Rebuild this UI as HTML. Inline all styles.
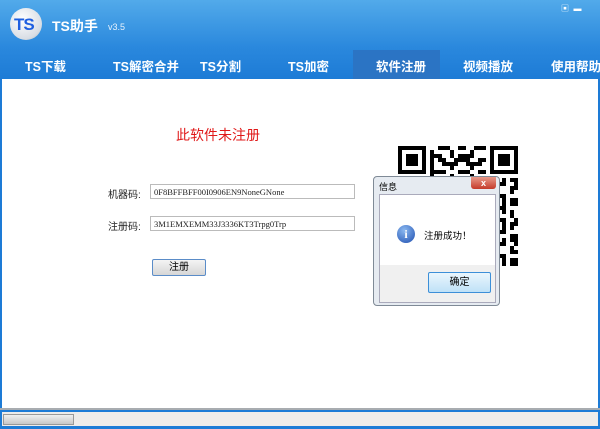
<!DOCTYPE html><html><head><meta charset="utf-8"><style>
body{margin:0;width:600px;height:429px;overflow:hidden;font-family:"Liberation Sans","Noto Sans CJK SC",sans-serif;position:relative;background:#fff}
.hd{position:absolute;left:0;top:0;width:600px;height:79px;background:linear-gradient(#52aaea,#2a88dd 60%,#1d7bd6)}
.logo{position:absolute;left:10px;top:8px;width:32px;height:32px;border-radius:50%;background:radial-gradient(circle at 40% 35%,#fff,#d8dde4 70%,#9aa);}
.logo span{position:absolute;left:4px;top:7px;font:bold 17px "Liberation Sans";color:#1f5fe0;letter-spacing:-1px}
.t{position:absolute;color:#fff;font-weight:bold;font-size:12.5px;top:56px;white-space:nowrap}
.act{position:absolute;left:353px;top:50px;width:87px;height:29px;background:#2b74c4}
.body{position:absolute;left:0;top:79px;width:596px;height:329px;border-left:2px solid #1d7bd6;border-right:2px solid #1d7bd6}
.lbl{position:absolute;font-size:10px;color:#222}
.inp{position:absolute;left:150px;width:205px;height:15px;border:1px solid #bbb;font:8.5px "Liberation Serif",serif;line-height:15px;padding-left:3px;box-sizing:border-box;color:#222;white-space:nowrap;overflow:hidden}
.btn{position:absolute;left:152px;top:259px;width:52px;height:15px;border:1px solid #5a8cc8;border-radius:2px;background:linear-gradient(#f4f4f4,#d6d6d6);font-size:10px;text-align:center;line-height:15px}
.dlg{position:absolute;left:373px;top:176px;width:127px;height:130px;background:#e6ebf1;border:1px solid #7f8a96;border-radius:4px;box-sizing:border-box}
.in{position:absolute;left:5px;top:17px;width:115px;height:107px;background:#f0f0f0;border:1px solid #aab}
.wh{position:absolute;left:0;top:0;width:115px;height:70px;background:#fff}
.x{position:absolute;left:97px;top:0px;width:25px;height:12px;background:linear-gradient(#e89a8a,#c43a2a);border-radius:0 0 3px 3px;color:#fff;font-size:9px;text-align:center;font-weight:bold;line-height:12px}
</style></head><body>
<div class="hd"></div>
<div class="logo"><span>TS</span></div>
<div style="position:absolute;left:52px;top:16px;color:#fff;font-weight:bold;font-size:14px">TS助手</div>
<div style="position:absolute;left:108px;top:22px;color:#e8f2fc;font-size:9px">v3.5</div>
<div style="position:absolute;left:561px;top:3px;color:#fff;font-size:8px">▣ &nbsp;▬</div>
<div class="act"></div>
<div class="t" style="left:25px">TS下载</div>
<div class="t" style="left:113px">TS解密合并</div>
<div class="t" style="left:200px">TS分割</div>
<div class="t" style="left:288px">TS加密</div>
<div class="t" style="left:376px">软件注册</div>
<div class="t" style="left:463px">视频播放</div>
<div class="t" style="left:551px">使用帮助</div>
<div class="body"></div>
<div style="position:absolute;left:176px;top:125px;color:#e01818;font-size:14px">此软件未注册</div>
<div class="lbl" style="left:108px;top:186px">机器码:</div>
<div class="inp" style="top:184px">0F8BFFBFF00I0906EN9NoneGNone</div>
<div class="lbl" style="left:108px;top:218px">注册码:</div>
<div class="inp" style="top:216px">3M1EMXEMM33J3336KT3Trpg0Trp</div>
<div class="btn">注册</div>
<svg style="position:absolute;left:398px;top:145px" width="120" height="122" viewBox="0 0 30 30" shape-rendering="crispEdges">
<defs>
<pattern id="a" width="5" height="3" patternUnits="userSpaceOnUse"><rect x="0" y="0" width="2" height="1"/><rect x="3" y="1" width="1" height="2"/></pattern>
<pattern id="b" width="7" height="4" patternUnits="userSpaceOnUse"><rect x="1" y="2" width="3" height="1"/><rect x="5" y="0" width="1" height="1"/></pattern>
<pattern id="c" width="3" height="5" patternUnits="userSpaceOnUse"><rect x="2" y="3" width="1" height="2"/></pattern>
</defs>
<g>
<rect x="8" y="0" width="14" height="8" fill="url(#a)"/><rect x="8" y="0" width="14" height="8" fill="url(#b)"/><rect x="8" y="0" width="14" height="8" fill="url(#c)"/>
<rect x="0" y="8" width="30" height="22" fill="url(#a)"/><rect x="0" y="8" width="30" height="22" fill="url(#b)"/><rect x="0" y="8" width="30" height="22" fill="url(#c)"/>
</g>
<rect x="0" y="0" width="7" height="7"/><rect x="1" y="1" width="5" height="5" fill="#fff"/><rect x="2" y="2" width="3" height="3"/>
<rect x="23" y="0" width="7" height="7"/><rect x="24" y="1" width="5" height="5" fill="#fff"/><rect x="25" y="2" width="3" height="3"/>
</svg>
<div class="dlg"><div style="position:absolute;left:5px;top:3px;font-size:9px">信息</div><div class="x">x</div>
<div class="in"><div class="wh"></div>
<div style="position:absolute;left:17px;top:30px;width:18px;height:18px;border-radius:50%;background:radial-gradient(circle at 40% 30%,#8ab8f0,#1f4fb0);color:#fff;font:bold 12px 'Liberation Serif';text-align:center;line-height:18px">i</div>
<div style="position:absolute;left:44px;top:33px;font-size:9.5px">注册成功！</div>
<div style="position:absolute;left:48px;top:77px;width:61px;height:19px;border:1px solid #3c8fd8;border-radius:2px;background:linear-gradient(#eaf6fd,#bfe1f7);font-size:10px;text-align:center;line-height:19px">确定</div>
</div></div>
<div style="position:absolute;left:0;top:408px;width:600px;height:2px;background:#a8acb0"></div>
<div style="position:absolute;left:0;top:410px;width:600px;height:19px;background:#1d7bd6"></div>
<div style="position:absolute;left:2px;top:412px;width:596px;height:14px;background:#eeecea"></div>
<div style="position:absolute;left:3px;top:414px;width:71px;height:11px;border:1px solid #999;background:linear-gradient(#f0f0f0,#c8c8c8);box-sizing:border-box"></div>
</body></html>
